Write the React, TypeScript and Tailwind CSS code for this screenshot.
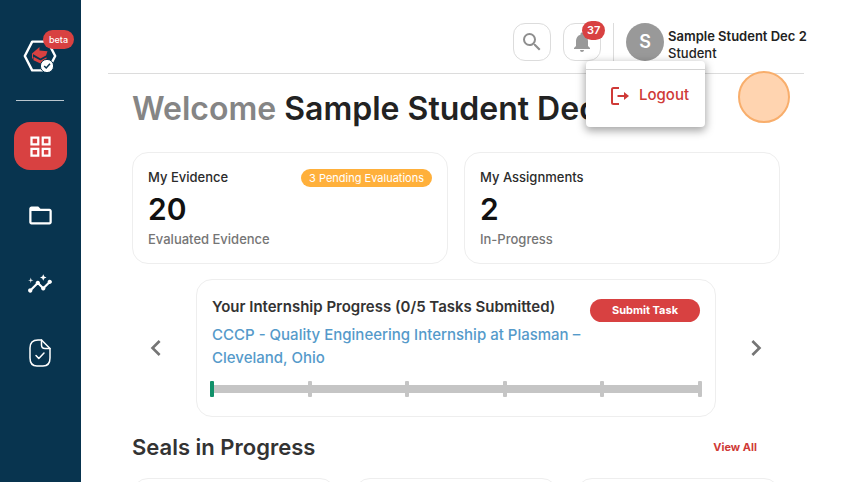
import React from "react";
import {
  MdChevronLeft,
  MdChevronRight,
  MdFolderOpen,
  MdGridView,
  MdInsights,
  MdNotifications,
  MdSearch,
} from "react-icons/md";
import clsx from "clsx";

const LogoIcon = () => (
  <svg viewBox="0 0 34 32" className="w-[34px] h-8" fill="none" aria-hidden="true">
    <path
      d="M9.2 1.6h15.6L32.2 16l-7.4 14.4H9.2L1.8 16z"
      stroke="#fff"
      strokeWidth="2.4"
      strokeLinejoin="round"
    />
    <path d="M9 13.5L16.5 7v3.6l8 .6-1.500 4.300-5.500 3z" fill="#d84141" />
    <path d="M10.5 16.8l7 3.6 6-3.2v3l-6 3.400-7-3.400z" fill="#d84141" />
    <path d="M9.5 13.5v5" stroke="#d84141" />
    <circle cx="24" cy="26" r="6.6" fill="#fff" stroke="#08344f" />
    <path d="M21.2 26l2 2 3.8-4.2" stroke="#08344f" strokeWidth="1.5" />
  </svg>
);

const FileCheckIcon = () => (
  <svg
    viewBox="0 0 22 28"
    className="w-[22px] h-7"
    fill="none"
    stroke="currentColor"
    strokeWidth="1.5"
    strokeLinecap="round"
    strokeLinejoin="round"
    aria-hidden="true"
  >
    <path d="M12.5 1H9C3.5 1 1 4 1 9v10c0 5 2.5 8 7 8h6c4.5 0 7-3 7-8V9.500z" />
    <path d="M12.5 1v5c0 2.5 1 3.5 3.5 3.5h5" />
    <path d="M7 16.5l2.8 3 5.2-5.5" />
  </svg>
);

const LogoutIcon = () => (
  <svg
    viewBox="0 0 18 18"
    className="size-[18px]"
    fill="none"
    stroke="currentColor"
    strokeWidth="2"
    aria-hidden="true"
  >
    <path d="M8 1H2.5Q1 1 1 2.5v13Q1 17 2.5 17H8" />
    <path d="M6.5 9h9" />
    <path d="M13 5l5 4-5 4z" fill="currentColor" stroke="none" />
  </svg>
);

const navItems = [
  { label: "Dashboard", icon: <MdGridView size={27} />, active: true },
  { label: "Evidence", icon: <MdFolderOpen size={27} />, active: false },
  { label: "Insights", icon: <MdInsights size={26} />, active: false },
  { label: "Assignments", icon: <FileCheckIcon />, active: false },
];

const stats = [
  { title: "My Evidence", value: 20, caption: "Evaluated Evidence", badge: "3 Pending Evaluations" },
  { title: "My Assignments", value: 2, caption: "In-Progress", badge: null },
];

const steps = [0, 1, 2, 3, 4, 5];

const Sidebar = () => (
  <aside className="flex w-[81px] shrink-0 flex-col items-center bg-[#08344f] pt-10 pr-px text-white">
    <div className="relative">
      <LogoIcon />
      <span className="absolute -top-[10px] left-5 rounded-full bg-[#d84141] px-[6px] text-[9px] leading-[19px] font-medium">
        beta
      </span>
    </div>
    <hr className="mt-7 w-12 border-[#b9c6ce]" />
    <nav className="mt-[21px] flex flex-col gap-[21px]">
      {navItems.map((item) => (
        <button
          key={item.label}
          type="button"
          aria-label={item.label}
          className={clsx(
            "flex h-12 w-[53px] items-center justify-center rounded-2xl",
            item.active && "bg-[#d84141]"
          )}
        >
          {item.icon}
        </button>
      ))}
    </nav>
  </aside>
);

const Header = () => (
  <header className="flex h-[74px] items-start justify-end border-b border-[#dcdcdc] pt-[23px]">
    <div className="flex gap-3">
      <button
        type="button"
        aria-label="Search"
        className="flex size-[38px] items-center justify-center rounded-xl border border-[#dcdcdc] text-[#8e8e8e]"
      >
        <MdSearch size={24} />
      </button>
      <button
        type="button"
        aria-label="Notifications"
        className="relative flex size-[38px] items-center justify-center rounded-xl border border-[#dcdcdc] text-[#999]"
      >
        <MdNotifications size={24} />
        <span className="absolute -top-[3px] left-[18px] rounded-full bg-[#d84141] px-[5px] text-[11px] leading-[19px] font-semibold text-white">
          37
        </span>
      </button>
      <div className="h-[38px] w-px bg-[#dcdcdc]" />
      <div className="relative flex gap-1">
        <div className="flex size-[38px] items-center justify-center rounded-full bg-[#999] text-lg font-semibold text-white">
          S
        </div>
        <div className="w-[136px] pt-[5px] text-[13px] leading-[17px] whitespace-nowrap text-[#222]">
          <p className="font-semibold">Sample Student Dec 2</p>
          <p className="font-medium">Student</p>
        </div>
        <div className="absolute top-[38px] -left-10 z-10 w-[119px] rounded-sm bg-white pt-2 shadow-[0_3px_8px_1px_rgba(0,0,0,0.35)]">
          <button
            type="button"
            className="flex h-[58px] w-full items-center gap-[10px] border-t border-[#d4d4d4] pr-3 pb-[6px] pl-[25px] text-[15px] font-medium text-[#cf3a37]"
          >
            <LogoutIcon />
            Logout
          </button>
        </div>
        <div className="absolute top-12 left-28 size-[52px] rounded-full border-2 border-[#f8ae6c] bg-[#ffd4b0]" />
      </div>
    </div>
  </header>
);

const StatCard = ({ title, value, caption, badge }: (typeof stats)[number]) => (
  <div className="h-[112px] rounded-2xl border border-[#eee] px-[15px] pt-4">
    <div className="flex h-[18px] items-center justify-between">
      <h2 className="text-[13px] font-medium text-[#2b2b2b]">{title}</h2>
      {badge && (
        <span className="rounded-full bg-[#ffb03b] px-2 text-[11px] leading-[18px] text-white">
          {badge}
        </span>
      )}
    </div>
    <p className="mt-[2px] text-[30px] leading-10 font-semibold text-[#111]">{value}</p>
    <p className="text-[13px] leading-5 font-medium text-[#757575]">{caption}</p>
  </div>
);

const InternshipProgress = () => (
  <section className="mt-[15px] flex items-center justify-between">
    <button type="button" aria-label="Previous" className="ml-2 text-[#757575]">
      <MdChevronLeft size={32} />
    </button>
    <div className="mx-6 h-[138px] flex-1 rounded-2xl border border-[#eee] px-[15px] pt-[15px]">
      <div className="flex items-start justify-between">
        <div className="w-[372px]">
          <h2 className="text-[15px] leading-[23px] font-semibold whitespace-nowrap text-[#333]">
            Your Internship Progress (0/5 Tasks Submitted)
          </h2>
          <a href="#internship" className="mt-[5px] block text-[15px] leading-[23px] font-medium text-[#559aca]">
            CCCP - Quality Engineering Internship at Plasman – Cleveland, Ohio
          </a>
        </div>
        <button
          type="button"
          className="mt-1 h-[23px] w-[110px] rounded-full bg-[#d84141] text-[11px] font-bold text-white"
        >
          Submit Task
        </button>
      </div>
      <div className="-mx-[2px] mt-3 flex h-4 items-center justify-between bg-[linear-gradient(#c5c5c5,#c5c5c5)] bg-[length:100%_8px] bg-center bg-no-repeat">
        {steps.map((step) => (
          <span
            key={step}
            className={clsx("h-4 w-1 rounded-[1px]", step === 0 ? "bg-[#11916a]" : "bg-[#c5c5c5]")}
          />
        ))}
      </div>
    </div>
    <button type="button" aria-label="Next" className="mr-2 text-[#757575]">
      <MdChevronRight size={32} />
    </button>
  </section>
);

const Seals = () => (
  <section className="mt-[14px]">
    <div className="flex h-8 items-center justify-between pr-[23px]">
      <h2 className="text-[22px] font-semibold text-[#333]">Seals in Progress</h2>
      <a href="#seals" className="text-[11px] font-bold text-[#cf3a37]">
        View All
      </a>
    </div>
    <div className="mt-[15px] grid grid-cols-3 gap-[18px]">
      {["one", "two", "three"].map((seal) => (
        <div key={seal} className="h-40 rounded-2xl border border-[#eee]" />
      ))}
    </div>
  </section>
);

export default function App() {
  return (
    <div className="flex h-screen overflow-hidden bg-white font-['Inter',sans-serif]">
      <Sidebar />
      <main className="min-w-0 flex-1 pr-[60px] pl-[27px]">
        <Header />
        <div className="px-6 pt-[15px]">
          <h1 className="text-[32px] leading-10 font-semibold whitespace-nowrap text-[#222]">
            <span className="text-[#858585]">Welcome</span> Sample Student Dec 2
          </h1>
          <div className="mt-[23px] grid grid-cols-2 gap-4">
            {stats.map((stat) => (
              <StatCard key={stat.title} {...stat} />
            ))}
          </div>
          <InternshipProgress />
          <Seals />
        </div>
      </main>
    </div>
  );
}
